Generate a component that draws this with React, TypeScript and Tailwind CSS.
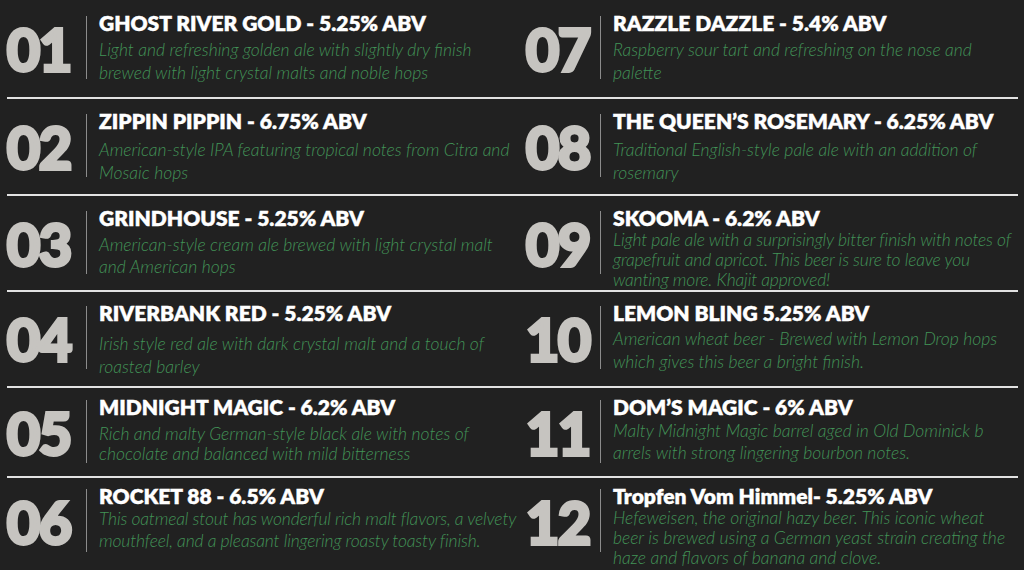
const left = [
  { n: '01', title: 'GHOST RIVER GOLD - 5.25% ABV', desc: ['Light and refreshing golden ale with slightly dry finish', 'brewed with light crystal malts and noble hops'], mt: 3, lh: 23 },
  { n: '02', title: 'ZIPPIN PIPPIN - 6.75% ABV', desc: ['American-style IPA featuring tropical notes from Citra and', 'Mosaic hops'], mt: 5, lh: 23 },
  { n: '03', title: 'GRINDHOUSE - 5.25% ABV', desc: ['American-style cream ale brewed with light crystal malt', 'and American hops'], mt: 4, lh: 22 },
  { n: '04', title: 'RIVERBANK RED - 5.25% ABV', desc: ['Irish style red ale with dark crystal malt and a touch of', 'roasted barley'], mt: 7, lh: 23 },
  { n: '05', title: 'MIDNIGHT MAGIC - 6.2% ABV', desc: ['Rich and malty German-style black ale with notes of', 'chocolate and balanced with mild bitterness'], mt: 5, lh: 20 },
  { n: '06', title: 'ROCKET 88 - 6.5% ABV', desc: ['This oatmeal stout has wonderful rich malt flavors, a velvety', 'mouthfeel, and a pleasant lingering roasty toasty finish.'], mt: 0, lh: 22, tight: true },
];

const right = [
  { n: '07', title: 'RAZZLE DAZZLE - 5.4% ABV', desc: ['Raspberry sour tart and refreshing on the nose and', 'palette'], mt: 3, lh: 23 },
  { n: '08', title: 'THE QUEEN’S ROSEMARY - 6.25% ABV', desc: ['Traditional English-style pale ale with an addition of', 'rosemary'], mt: 5, lh: 23 },
  { n: '09', title: 'SKOOMA - 6.2% ABV', desc: ['Light pale ale with a surprisingly bitter finish with notes of', 'grapefruit and apricot. This beer is sure to leave you', 'wanting more. Khajit approved!'], mt: 0, lh: 20, tight: true },
  { n: '10', title: 'LEMON BLING 5.25% ABV', desc: ['American wheat beer - Brewed with Lemon Drop hops', 'which gives this beer a bright finish.'], mt: 2, lh: 23 },
  { n: '11', title: 'DOM’S MAGIC - 6% ABV', desc: ['Malty Midnight Magic barrel aged in Old Dominick b', 'arrels with strong lingering bourbon notes.'], mt: 1, lh: 22 },
  { n: '12', title: 'Tropfen Vom Himmel- 5.25% ABV', desc: ['Hefeweisen, the original hazy beer. This iconic wheat', 'beer is brewed using a German yeast strain creating the', 'haze and flavors of banana and clove.'], mt: 0, lh: 20 },
];

// row heights and top padding, tuned per row
const rows = [
  { h: 'h-[97px]', pt: 'pt-[11px]' },
  { h: 'h-[95px]', pt: 'pt-[10px]' },
  { h: 'h-[94px]', pt: 'pt-[10px]' },
  { h: 'h-[94px]', pt: 'pt-[9px]' },
  { h: 'h-[88px]', pt: 'pt-[7px]' },
  { h: 'h-[92px]', pt: 'pt-[6px]' },
];

type Beer = { n: string; title: string; desc: string[]; mt: number; lh: number; tight?: boolean };

function BeerCell({ beer, side, pt }: { beer: Beer; side: 'left' | 'right'; pt: string }) {
  return (
    <div className={`flex items-start ${pt} ${side === 'left' ? 'pl-[7px]' : 'pl-[4px]'}`}>
      {/* Number */}
      <div
        className={`shrink-0 mt-[5px] h-[63px] flex items-center ${
          side === 'left' ? 'w-[79px] justify-start' : 'w-[84px] justify-center'
        }`}
      >
        <span className="text-[57px] leading-none font-bold text-[#c6c4c0] tracking-[-1px] pt-[4px] [-webkit-text-stroke:4px_#c6c4c0]">
          {beer.n}
        </span>
      </div>
      {/* Divider */}
      <div className="shrink-0 mt-[5px] h-[63px] w-px bg-[#8c8c8c]" />
      {/* Text */}
      <div className="shrink-0 ml-[12px] whitespace-nowrap">
        <h2 className="text-[21px] leading-[24px] font-extrabold text-white [-webkit-text-stroke:0.4px_white]">
          {beer.title}
        </h2>
        <p
          className={`text-[17.5px] font-light italic text-[#429357] ${beer.tight ? 'tracking-[-0.15px]' : ''}`}
          style={{ marginTop: beer.mt, lineHeight: `${beer.lh}px` }}
        >
          {beer.desc.map((line, i) => (
            <span key={i} className="block">
              {line}
            </span>
          ))}
        </p>
      </div>
    </div>
  );
}

export default function App() {
  return (
    <div
      className="w-[1024px] h-[570px] overflow-hidden bg-[#212121]"
      style={{ fontFamily: 'Lato, "Open Sans", sans-serif' }}
    >
      {left.map((beer, i) => (
        <div key={beer.n}>
          <div className={`grid grid-cols-2 ${rows[i].h}`}>
            <BeerCell beer={beer} side="left" pt={rows[i].pt} />
            <BeerCell beer={right[i]} side="right" pt={rows[i].pt} />
          </div>
          {i < left.length - 1 && <div className="ml-[7px] w-[1011px] h-[2px] bg-[#e2e2e2]" />}
        </div>
      ))}
    </div>
  );
}
